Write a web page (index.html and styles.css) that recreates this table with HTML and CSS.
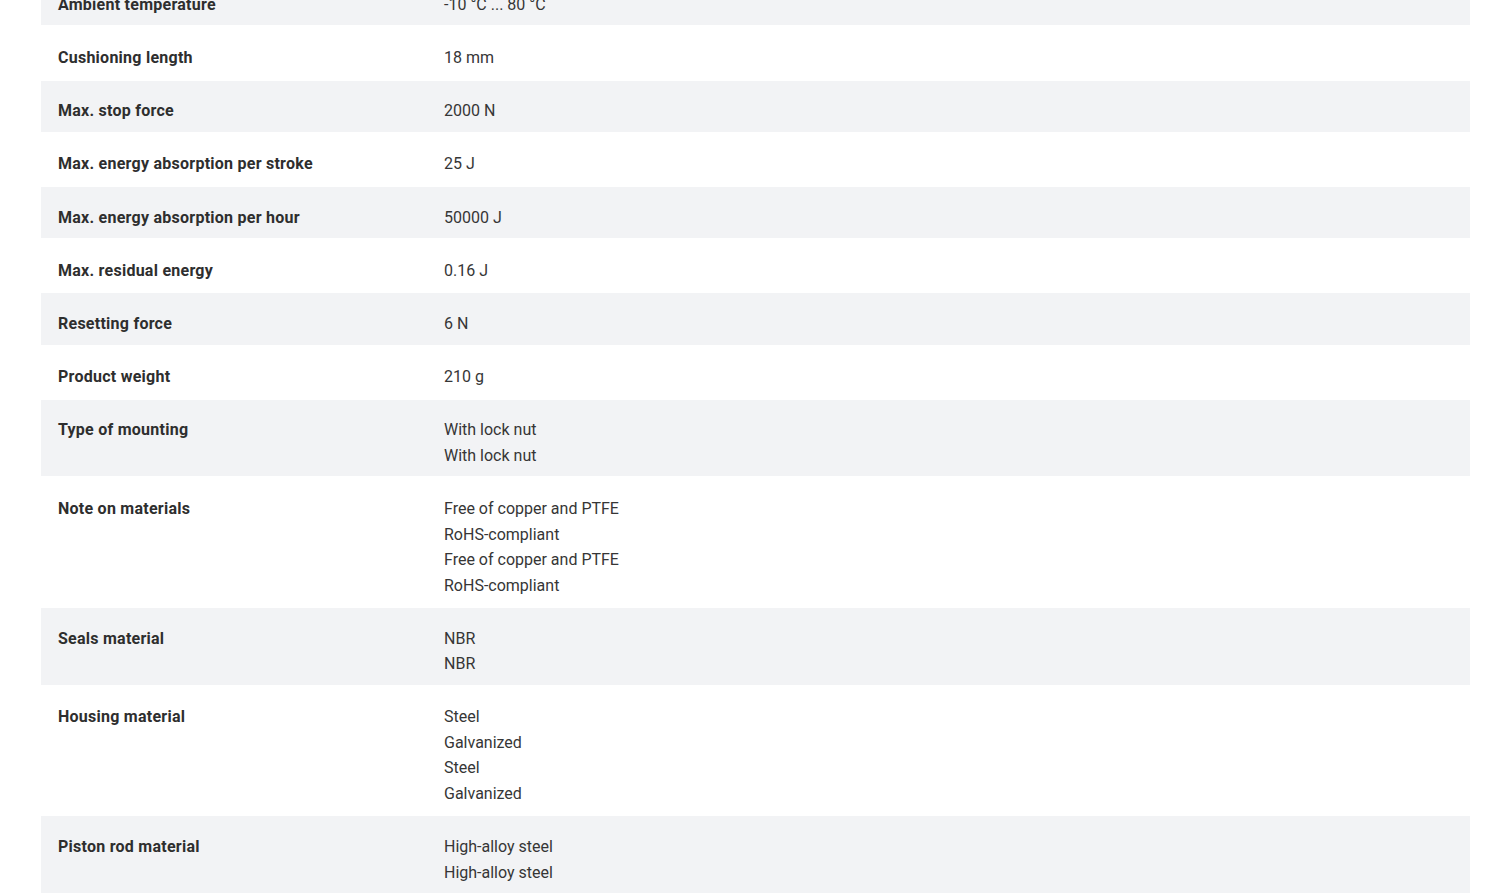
FILE: index.html
```html
<!DOCTYPE html>
<html lang="en">
<head>
<meta charset="utf-8">
<title>Technical data</title>
<link rel="stylesheet" href="styles.css">
</head>
<body>
<div class="page">
  <div class="spec-table">
    <div class="row alt"><div class="label">Ambient temperature</div><div class="value"><div>-10 °C ... 80 °C</div></div></div>
    <div class="row"><div class="label">Cushioning length</div><div class="value"><div>18 mm</div></div></div>
    <div class="row alt"><div class="label">Max. stop force</div><div class="value"><div>2000 N</div></div></div>
    <div class="row"><div class="label">Max. energy absorption per stroke</div><div class="value"><div>25 J</div></div></div>
    <div class="row alt"><div class="label">Max. energy absorption per hour</div><div class="value"><div>50000 J</div></div></div>
    <div class="row"><div class="label">Max. residual energy</div><div class="value"><div>0.16 J</div></div></div>
    <div class="row alt"><div class="label">Resetting force</div><div class="value"><div>6 N</div></div></div>
    <div class="row"><div class="label">Product weight</div><div class="value"><div>210 g</div></div></div>
    <div class="row alt"><div class="label">Type of mounting</div><div class="value"><div>With lock nut</div><div>With lock nut</div></div></div>
    <div class="row"><div class="label">Note on materials</div><div class="value"><div>Free of copper and PTFE</div><div>RoHS-compliant</div><div>Free of copper and PTFE</div><div>RoHS-compliant</div></div></div>
    <div class="row alt"><div class="label">Seals material</div><div class="value"><div>NBR</div><div>NBR</div></div></div>
    <div class="row"><div class="label">Housing material</div><div class="value"><div>Steel</div><div>Galvanized</div><div>Steel</div><div>Galvanized</div></div></div>
    <div class="row alt"><div class="label">Piston rod material</div><div class="value"><div>High-alloy steel</div><div>High-alloy steel</div></div></div>
  </div>
</div>
</body>
</html>
```

FILE: styles.css
```css
html, body {
  margin: 0;
  padding: 0;
  background: #ffffff;
}
body {
  font-family: Roboto, "Liberation Sans", sans-serif;
  font-size: 16px;
  color: #333333;
  overflow: hidden;
}
.page {
  padding: 0 30px 0 41px;
  margin-top: -26.8px;
}
.spec-table {
  display: flex;
  flex-direction: column;
}
.row {
  display: grid;
  grid-template-columns: 403px 1fr;
  border-top: 1px solid transparent;
  border-bottom: 1px solid transparent;
  padding: 17.7px 0 8px 0;
  line-height: 25.5px;
}
.row.alt {
  background: #f2f3f5;
  background-clip: padding-box;
}
.label {
  padding-left: 17px;
  font-weight: 700;
  letter-spacing: 0.25px;
  color: #2e2e2e;
}
.value {
  display: flex;
  flex-direction: column;
  color: #363636;
}
```
